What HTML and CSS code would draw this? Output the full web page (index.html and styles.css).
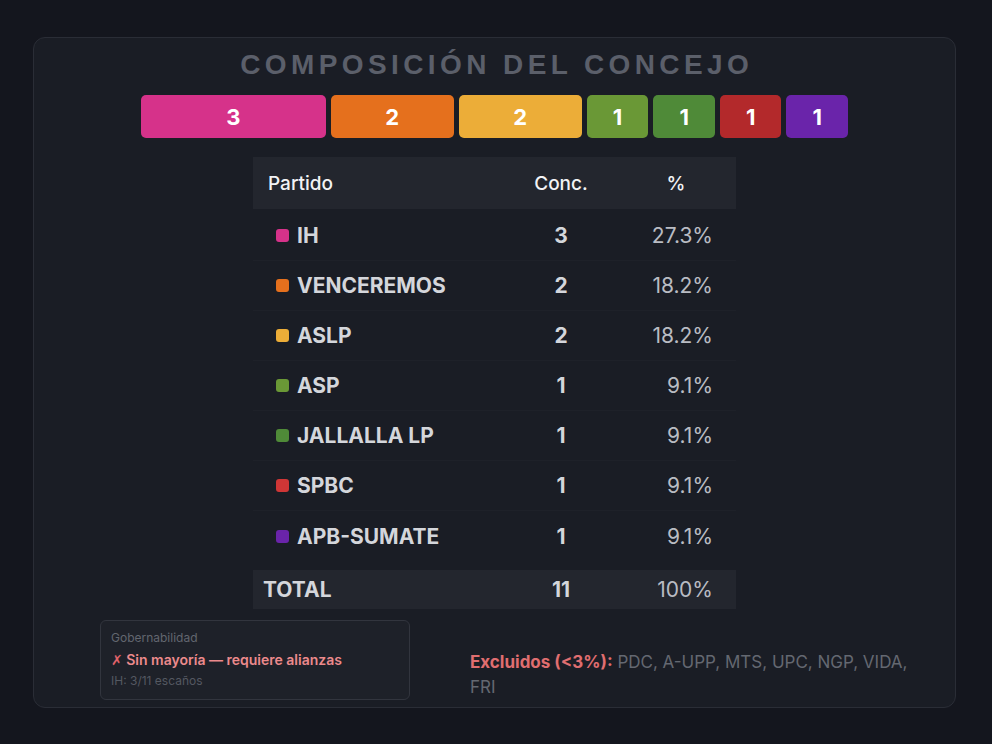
FILE: index.html
```html
<!DOCTYPE html>
<html lang="es">
<head>
<meta charset="utf-8">
<title>Composición del Concejo</title>
<link rel="stylesheet" href="styles.css">
</head>
<body>
<div class="card">
  <h1 class="title">COMPOSICIÓN DEL CONCEJO</h1>
  <div class="bar">
    <div class="seg c-ih" style="flex-grow:3">3</div>
    <div class="seg c-ven" style="flex-grow:2">2</div>
    <div class="seg c-aslp" style="flex-grow:2">2</div>
    <div class="seg c-asp" style="flex-grow:1">1</div>
    <div class="seg c-jal" style="flex-grow:1">1</div>
    <div class="seg c-spbc" style="flex-grow:1">1</div>
    <div class="seg c-apb" style="flex-grow:1">1</div>
  </div>
  <div class="table">
    <div class="row head">
      <div class="name">Partido</div>
      <div class="conc">Conc.</div>
      <div class="pct">%</div>
    </div>
    <div class="body">
      <div class="row"><div class="name"><span class="sw c-ih"></span>IH</div><div class="conc">3</div><div class="pct">27.3%</div></div>
      <div class="row"><div class="name"><span class="sw c-ven"></span>VENCEREMOS</div><div class="conc">2</div><div class="pct">18.2%</div></div>
      <div class="row"><div class="name"><span class="sw c-aslp"></span>ASLP</div><div class="conc">2</div><div class="pct">18.2%</div></div>
      <div class="row"><div class="name"><span class="sw c-asp"></span>ASP</div><div class="conc">1</div><div class="pct">9.1%</div></div>
      <div class="row"><div class="name"><span class="sw c-jal"></span>JALLALLA LP</div><div class="conc">1</div><div class="pct">9.1%</div></div>
      <div class="row"><div class="name"><span class="sw c-spbc2"></span>SPBC</div><div class="conc">1</div><div class="pct">9.1%</div></div>
      <div class="row"><div class="name"><span class="sw c-apb"></span>APB-SUMATE</div><div class="conc">1</div><div class="pct">9.1%</div></div>
    </div>
    <div class="row total">
      <div class="name">TOTAL</div>
      <div class="conc">11</div>
      <div class="pct">100%</div>
    </div>
  </div>
  <div class="bottom">
    <div class="gov">
      <div class="gov-label">Gobernabilidad</div>
      <div class="gov-status"><span class="xmark">✗</span> Sin mayoría — requiere alianzas</div>
      <div class="gov-sub">IH: 3/11 escaños</div>
    </div>
    <p class="excl"><span class="excl-label">Excluidos (&lt;3%):</span> PDC, A-UPP, MTS, UPC, NGP, VIDA, FRI</p>
  </div>
</div>
</body>
</html>
```

FILE: styles.css
```css
* { box-sizing: border-box; }
html, body { margin: 0; padding: 0; }
body {
  background: #14161e;
  font-family: Inter, "Noto Sans", sans-serif;
  width: 992px;
  height: 744px;
  overflow: hidden;
  padding: 37px 36px 0 33px;
}
.card {
  width: 923px;
  height: 671px;
  background: #1a1d25;
  border: 1px solid #2a2d36;
  border-radius: 12px;
  padding-top: 10px;
  display: flex;
  flex-direction: column;
  align-items: center;
}
.title {
  margin: 0;
  font-family: "Liberation Sans", Arial, sans-serif;
  font-weight: 700;
  font-size: 28px;
  line-height: 34px;
  letter-spacing: 4.4px;
  padding-left: 4.4px;
  color: #5b5f6a;
}
.bar {
  margin-top: 13px;
  width: 707px;
  height: 43px;
  display: flex;
  gap: 5px;
}
.seg {
  flex-basis: 0;
  border-radius: 5px;
  display: flex;
  align-items: center;
  justify-content: center;
  color: #ffffff;
  font-weight: 700;
  font-size: 22px;
}
.c-ih { background: #d6328a; }
.c-ven { background: #e5701d; }
.c-aslp { background: #ecad38; }
.c-asp { background: #6a9836; }
.c-jal { background: #4f8a38; }
.c-spbc { background: #b3292b; }
.c-spbc2 { background: #cf3636; }
.c-apb { background: #6a24aa; }

.table {
  margin-top: 19px;
  width: 483px;
}
.row {
  display: grid;
  grid-template-columns: 253px 110px 120px;
  align-items: center;
  height: 50px;
}
.head {
  height: 52px;
  background: #23262e;
  color: #f2f3f5;
  font-size: 19px;
  font-weight: 500;
}
.head .name { padding-left: 15px; }
.head .conc { text-align: center; }
.head .pct { text-align: center; }
.body { margin-top: 2px; }
.body .row { border-bottom: 1px solid #1e2129; }
.body .row:last-child { border-bottom: none; }
.body .name {
  display: flex;
  align-items: center;
  padding-left: 23px;
  font-size: 21px;
  font-weight: 700;
  color: #d4d6db;
}
.sw {
  width: 13px;
  height: 13px;
  border-radius: 3px;
  margin-right: 8px;
}
.body .conc, .total .conc {
  text-align: center;
  font-size: 21px;
  font-weight: 700;
  color: #d4d6db;
}
.body .pct, .total .pct {
  text-align: right;
  padding-right: 23px;
  font-size: 21px;
  color: #b9bcc3;
}
.total {
  margin-top: 9px;
  height: 39px;
  background: #23262e;
}
.total .name {
  padding-left: 10px;
  font-size: 21px;
  font-weight: 700;
  color: #d4d6db;
}
.bottom {
  margin-top: 11px;
  align-self: stretch;
  display: flex;
  padding-left: 66px;
}
.gov {
  width: 310px;
  height: 80px;
  border: 1px solid #32353e;
  border-radius: 6px;
  background: #1e2129;
  padding: 9px 10px 0 10px;
}
.gov-label {
  font-size: 12px;
  line-height: 16px;
  color: #62666f;
}
.gov-status {
  margin-top: 4px;
  font-size: 14px;
  line-height: 20px;
  font-weight: 600;
  color: #ec8a8c;
}
.xmark {
  font-family: "DejaVu Sans", sans-serif;
  font-weight: 400;
  color: #e0626a;
}
.gov-sub {
  margin-top: 3px;
  font-size: 12px;
  line-height: 16px;
  color: #545861;
}
.excl {
  margin: 30px 0 0 60px;
  width: 452px;
  font-size: 17px;
  line-height: 25px;
  color: #646871;
}
.excl-label {
  color: #e06e70;
  font-weight: 700;
}
```
